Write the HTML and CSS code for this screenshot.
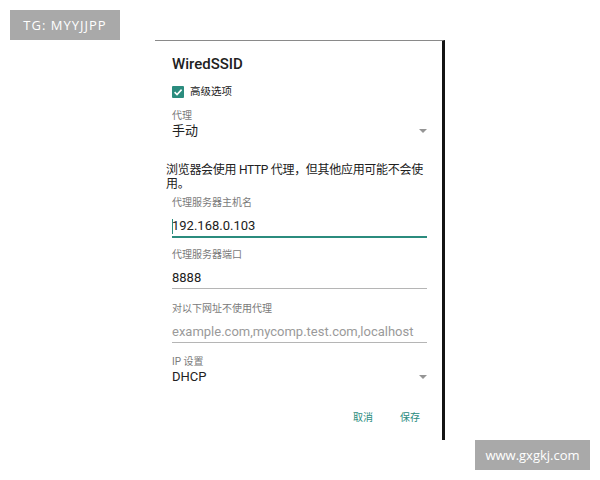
FILE: index.html
```html
<!DOCTYPE html>
<html lang="zh-CN">
<head>
  <meta charset="UTF-8" />
  <title>WiredSSID</title>
  <link rel="stylesheet" href="styles.css">
</head>
<body>
  <div class="mark mark-top">TG: MYYJJPP</div>

  <div class="dialog">
    <div class="title">WiredSSID</div>

    <label class="check-row">
      <span class="checkbox">
        <svg width="12" height="12" viewBox="0 0 12 12"><path d="M2.6 6.2 L5 8.5 L9.6 3.6" fill="none" stroke="#fff" stroke-width="1.6"/></svg>
      </span>
      高级选项
    </label>

    <div class="label label-first">代理</div>
    <div class="select">
      <span>手动</span>
      <span class="arrow"></span>
    </div>

    <p class="note">浏览器会使用 HTTP 代理，但其他应用可能不会使用。</p>

    <div class="label label-host">代理服务器主机名</div>
    <div class="field field-active"><span class="caret"></span>192.168.0.103</div>

    <div class="label label-port">代理服务器端口</div>
    <div class="field">8888</div>

    <div class="label label-bypass">对以下网址不使用代理</div>
    <div class="field placeholder">example.com,mycomp.test.com,localhost</div>

    <div class="label label-ip">IP 设置</div>
    <div class="select">
      <span>DHCP</span>
      <span class="arrow"></span>
    </div>

    <div class="actions">
      <button class="action">取消</button>
      <button class="action">保存</button>
    </div>
  </div>

  <div class="mark mark-bottom">www.gxgkj.com</div>
</body>
</html>
```

FILE: styles.css
```css
:root {
  --text: #212121;
  --text-muted: #7a7a7a;
  --teal: #2b8c7e;
  --line: #b5b5b5;
}

* {
  box-sizing: border-box;
}

body {
  margin: 0;
  background: #fff;
  font-family: Roboto, "Noto Sans CJK SC", sans-serif;
  color: var(--text);
  position: relative;
  width: 600px;
  height: 480px;
  overflow: hidden;
}

.mark {
  position: absolute;
  background: #a9a9a9;
  color: #fff;
  font-family: "Open Sans", "Liberation Sans", sans-serif;
  font-size: 13px;
  display: flex;
  align-items: center;
  justify-content: center;
}

.mark-top {
  left: 10px;
  top: 10px;
  width: 110px;
  height: 30px;
  letter-spacing: 1px;
}

.mark-bottom {
  left: 475px;
  top: 440px;
  width: 115px;
  height: 30px;
}

.dialog {
  margin: 40px 0 0 155px;
  width: 290px;
  height: 400px;
  border-top: 1px solid #8a8a8a;
  border-right: 3px solid #141414;
  padding: 13px 15px 0 17px;
  display: flex;
  flex-direction: column;
}

.title {
  font-size: 15px;
  font-weight: 500;
  line-height: 20px;
}

.check-row {
  display: flex;
  align-items: center;
  gap: 6px;
  margin-top: 10px;
  font-size: 10.5px;
  line-height: 16px;
}

.checkbox {
  width: 12px;
  height: 12px;
  border-radius: 1px;
  background: var(--teal);
  display: flex;
}

.label {
  font-size: 10px;
  line-height: 14px;
  color: var(--text-muted);
}

.label-first { margin-top: 9px; }
.label-host { margin-top: 5px; }
.label-port { margin-top: 10px; }
.label-bypass { margin-top: 13px; }
.label-ip { margin-top: 12px; }

.select {
  display: flex;
  justify-content: space-between;
  align-items: center;
  font-size: 13px;
  line-height: 16px;
}

.arrow {
  width: 0;
  height: 0;
  border-left: 4px solid transparent;
  border-right: 4px solid transparent;
  border-top: 4px solid #959595;
}

.note {
  margin: 24px 0 0 -6px;
  font-size: 12px;
  line-height: 14px;
  letter-spacing: -0.3px;
  width: 262px;
}

.field {
  margin-top: 7px;
  font-size: 13px;
  line-height: 18px;
  border-bottom: 1px solid var(--line);
  padding-bottom: 1px;
  position: relative;
}

.field-active {
  border-bottom: 2px solid var(--teal);
}

.caret {
  position: absolute;
  left: 0;
  top: 2px;
  width: 1px;
  height: 15px;
  background: var(--teal);
}

.placeholder {
  color: #9a9a9a;
}

.actions {
  display: flex;
  justify-content: flex-end;
  gap: 27px;
  margin-top: 25px;
  padding-right: 7px;
}

.action {
  border: none;
  background: none;
  padding: 0;
  font-family: inherit;
  font-size: 10px;
  line-height: 16px;
  color: var(--teal);
}
```
